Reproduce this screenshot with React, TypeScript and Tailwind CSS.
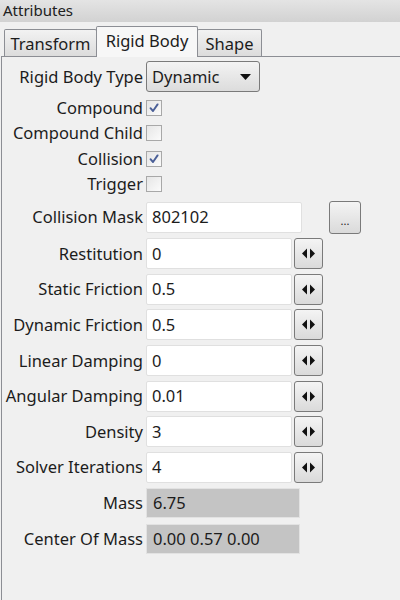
import React from "react";

const font = "font-['Noto_Sans',sans-serif]";

function Check({ checked }: { checked?: boolean }) {
  return (
    <div className="w-[16px] h-[16px] border border-[#a8a8a8] bg-gradient-to-br from-[#e6e6e6] to-[#fbfbfb] flex items-center justify-center">
      {checked && (
        <svg width="12" height="12" viewBox="0 0 12 12">
          <path d="M2.5 6.2 L5 9 L9.6 2.4" fill="none" stroke="#4a5f97" strokeWidth="1.9" strokeLinecap="round" strokeLinejoin="round" />
        </svg>
      )}
    </div>
  );
}

function Spin() {
  return (
    <div className="w-[29px] h-[31px] ml-[2px] rounded-[3px] border border-[#7a7a7a] bg-gradient-to-b from-[#f4f4f4] to-[#dadada] flex items-center justify-center">
      <svg width="15" height="11" viewBox="0 0 15 11">
        <path d="M6 0.5 L6 10.5 L1 5.5 Z" fill="#111" />
        <path d="M9 0.5 L9 10.5 L14 5.5 Z" fill="#111" />
      </svg>
    </div>
  );
}

function Label({ children }: { children: React.ReactNode }) {
  return <div className="w-[141px] shrink-0 text-right whitespace-nowrap">{children}</div>;
}

function InputRow({ label, value }: { label: string; value: string }) {
  return (
    <div className="flex items-center h-[35.6px]">
      <Label>{label}</Label>
      <div className="ml-[3px] w-[146px] h-[31px] bg-white border border-[#e0e0e0] rounded-[2px] flex items-center pl-[5px]">{value}</div>
      <Spin />
    </div>
  );
}

function ReadRow({ label, value }: { label: string; value: string }) {
  return (
    <div className="flex items-center h-[35.6px]">
      <Label>{label}</Label>
      <div className="ml-[3px] w-[154px] h-[30px] bg-[#c4c4c4] border border-[#e2e2e2] flex items-center pl-[6px]">{value}</div>
    </div>
  );
}

function CheckRow({ label, checked }: { label: string; checked?: boolean }) {
  return (
    <div className="flex items-center h-[25.5px]">
      <Label>{label}</Label>
      <div className="ml-[3px]">
        <Check checked={checked} />
      </div>
    </div>
  );
}

export default function App() {
  return (
    <div className={`w-[400px] h-[600px] bg-[#f0f0f0] text-[#1c1c1c] text-[16.5px] leading-[22px] overflow-hidden ${font}`}>
      <div className="h-[22px] bg-gradient-to-b from-[#e4e4e4] to-[#d2d2d2] pl-[3px] leading-[20px] text-[15px] text-[#202020]">Attributes</div>
      <div className="flex items-end h-[34px] pl-[4px] relative z-10">
        <div className="w-[93px] h-[27px] border border-[#8c8e94] border-b-0 bg-gradient-to-b from-[#f2f2f2] to-[#dcdcdc] flex items-center justify-center rounded-t-[2px] pt-[2px]">Transform</div>
        <div className="w-[102px] h-[31px] -ml-[1px] border border-[#8c8e94] border-b-0 bg-[#f7f7f7] flex items-center justify-center pb-[2px] rounded-t-[2px] -mb-[1px]">Rigid Body</div>
        <div className="w-[65px] h-[27px] -ml-[1px] border border-[#8c8e94] border-b-0 bg-gradient-to-b from-[#f2f2f2] to-[#dcdcdc] flex items-center justify-center rounded-t-[2px] pt-[2px]">Shape</div>
      </div>
      <div className="ml-[1px] h-[544px] border-l border-t border-[#8c8e94] bg-[#f0f0f0]">
        <div className="flex items-center h-[31px] mt-[4px]">
          <Label>Rigid Body Type</Label>
          <div className="ml-[3px] w-[114px] h-[31px] rounded-[3px] border border-[#7a7a7a] bg-gradient-to-b from-[#f3f3f3] to-[#dcdcdc] flex items-center pl-[5px] justify-between pr-[8px]">
            <span>Dynamic</span>
            <svg width="11" height="6" viewBox="0 0 11 6">
              <path d="M0 0 L11 0 L5.5 6 Z" fill="#111" />
            </svg>
          </div>
        </div>
        <div className="mt-[3px]">
          <CheckRow label="Compound" checked />
          <CheckRow label="Compound Child" />
          <CheckRow label="Collision" checked />
          <CheckRow label="Trigger" />
        </div>
        <div className="flex items-center h-[36px] mt-[2px]">
          <Label>Collision Mask</Label>
          <div className="ml-[3px] w-[156px] h-[31px] bg-white border border-[#e0e0e0] rounded-[2px] flex items-center pl-[5px]">802102</div>
          <div className="ml-[27px] w-[32px] h-[33px] rounded-[3px] border border-[#7a7a7a] bg-gradient-to-b from-[#f4f4f4] to-[#dadada] flex items-end justify-center pb-[7px] text-[11px] leading-none">...</div>
        </div>
        <div className="mt-[1px]">
          <InputRow label="Restitution" value="0" />
          <InputRow label="Static Friction" value="0.5" />
          <InputRow label="Dynamic Friction" value="0.5" />
          <InputRow label="Linear Damping" value="0" />
          <InputRow label="Angular Damping" value="0.01" />
          <InputRow label="Density" value="3" />
          <InputRow label="Solver Iterations" value="4" />
          <ReadRow label="Mass" value="6.75" />
          <ReadRow label="Center Of Mass" value="0.00 0.57 0.00" />
        </div>
      </div>
    </div>
  );
}
